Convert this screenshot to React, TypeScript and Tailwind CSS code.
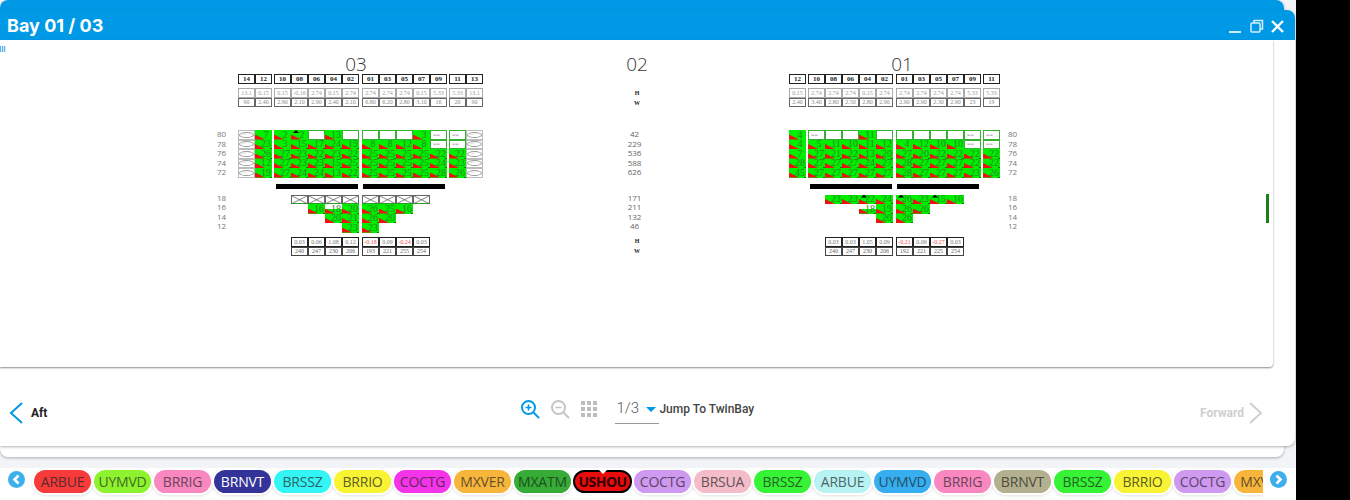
const serif = "font-['Liberation_Serif',serif]";

function SlimChevron({ dir, className }: { dir: "left" | "right"; className: string }) {
  return (
    <svg viewBox="0 0 14 22" className={`w-[14px] h-[22px] ${className}`} fill="none" stroke="currentColor" strokeWidth="2">
      <path d={dir === "left" ? "M13 1L2 11l11 10" : "M1 1l11 10L1 21"} />
    </svg>
  );
}

function RoundArrow({ dir }: { dir: "left" | "right" }) {
  return (
    <svg viewBox="0 0 17 17" className="w-[17px] h-[17px] shrink-0">
      <circle cx="8.5" cy="8.5" r="8.5" fill="#3db0ec" />
      <path
        d={dir === "left" ? "M10.5 4.5L6.5 8.5l4 4" : "M6.5 4.5l4 4-4 4"}
        fill="none"
        stroke="#fff"
        strokeWidth="2.6"
      />
    </svg>
  );
}

function ZoomIcon({ plus, className }: { plus?: boolean; className: string }) {
  return (
    <svg viewBox="0 0 20 20" className={`w-[20px] h-[20px] ${className}`} fill="none" stroke="currentColor" strokeWidth="2">
      <circle cx="8.5" cy="8.5" r="6.5" />
      <path d="M13.5 13.5L19 19" />
      <path d={plus ? "M5.5 8.5h6M8.5 5.5v6" : "M5.5 8.5h6"} strokeWidth="1.6" />
    </svg>
  );
}

// one slot in the bay plan: "" empty, W white, = booked, O reefer oval, X hatch cover, ^n flagged, ~n partial
function Slot({ v }: { v: string }) {
  if (v === "") return <div className="w-[17px] h-full" />;
  if (v === "W")
    return <div className="w-[17px] h-full bg-white border border-[#35b035]" />;
  if (v === "=")
    return (
      <div className="w-[17px] h-full bg-white border border-[#35b035] flex items-center pl-[2px]">
        <span className={`${serif} text-[6px] leading-none text-[#888]`}>==</span>
      </div>
    );
  if (v === "O")
    return (
      <div className="w-[17px] h-full bg-white border border-[#bbb] flex items-center justify-center">
        <div className="w-[15px] h-[6px] rounded-[50%] border border-[#999] flex items-center pl-[2px]">
          <span className={`${serif} text-[4px] leading-none text-[#999]`}>==</span>
        </div>
      </div>
    );
  if (v === "X")
    return (
      <div className="w-[17px] h-full border border-[#666] border-b-[#2a9a2a] bg-white">
        <svg viewBox="0 0 17 10" preserveAspectRatio="none" className="w-full h-full">
          <path d="M0 0L17 10M17 0L0 10" stroke="#444" strokeWidth="0.8" fill="none" />
        </svg>
      </div>
    );
  const flagged = v[0] === "^";
  const partial = v[0] === "~";
  const num = flagged || partial ? v.slice(1) : v;
  return (
    <div
      className={`relative w-[17px] h-full flex items-center justify-center pl-[5px] overflow-hidden ${
        partial ? "bg-white" : "bg-[#00ee00]"
      }`}
    >
      {partial && <span className="absolute left-0 right-0 bottom-0 h-[5px] bg-[#00ee00]" />}
      <span className="absolute left-0 bottom-0 w-[10px] h-[5px] bg-[#ee1111] [clip-path:polygon(0_0,0_100%,100%_100%)]" />
      {flagged && (
        <span className="absolute left-[2px] top-0 w-[6px] h-[3px] bg-black [clip-path:polygon(50%_0,0_100%,100%_100%)]" />
      )}
      {Number(num) >= 15 && <span className="absolute right-0 bottom-0 w-[2px] h-px bg-[#1a6a1a]" />}
      <span className={`relative ${serif} text-[10px] leading-none text-[#2a862a]`}>{num}</span>
    </div>
  );
}

function BoxRow({
  cols,
  gaps,
  cls,
  text,
}: {
  cols: string[][];
  gaps: string;
  cls: string;
  text: string;
}) {
  return (
    <div className={`flex ${gaps}`}>
      {cols.map((group, i) => (
        <div key={i} className="flex">
          {group.map((c, j) => (
            <div
              key={j}
              className={`w-[17px] h-[9.5px] border flex items-center justify-center bg-white ${cls} ${serif} text-[6px] leading-none ${
                c.startsWith("!") ? "text-[#f05050]" : text
              }`}
            >
              {c.replace("!", "")}
            </div>
          ))}
        </div>
      ))}
    </div>
  );
}

type BayData = {
  title: string;
  titleCls: string;
  heads: string[][];
  h: string[][];
  w: string[][];
  upper: string[][][];
  lower: string[][][];
  barPad: string;
  lowerPad: string;
  width: string;
  bottomH: string[][];
  bottomW: string[][];
};

function Bay({ b }: { b: BayData }) {
  return (
    <div className={`${b.width} flex flex-col`}>
      <div
        className={`h-[19px] flex items-center justify-center font-['Open_Sans',sans-serif] text-[19px] font-light text-[#333] leading-none ${b.titleCls}`}
      >
        {b.title}
      </div>
      <div className="flex gap-[2px] [&>*:nth-child(3)]:ml-px">
        {b.heads.map((g, i) => (
          <div key={i} className="flex">
            {g.map((c) => (
              <div
                key={c}
                className={`w-[17px] h-[10px] border border-[#222] flex items-center justify-center bg-white ${serif} text-[7px] font-bold leading-none text-[#222]`}
              >
                {c}
              </div>
            ))}
          </div>
        ))}
      </div>
      <div className="mt-[4px]">
        <BoxRow cols={b.h} gaps="gap-[2px] [&>*:nth-child(3)]:ml-px" cls="border-[#aaa]" text="text-[#999]" />
        <BoxRow cols={b.w} gaps="gap-[2px] [&>*:nth-child(3)]:ml-px" cls="border-[#666]" text="text-[#888]" />
      </div>
      <div className="mt-[23px] flex gap-[2px] [&>*:nth-child(3)]:ml-px">
        {b.upper.map((group, g) => (
          <div key={g} className="flex flex-col">
            {group.map((row, r) => (
              <div key={r} className="flex h-[9.5px]">
                {row.map((v, i) => (
                  <Slot key={i} v={v} />
                ))}
              </div>
            ))}
          </div>
        ))}
      </div>
      <div className={`mt-[6px] flex gap-[5px] ${b.barPad}`}>
        <div className="w-[82px] h-[5px] bg-black" />
        <div className="w-[82px] h-[5px] bg-black" />
      </div>
      <div className={`mt-[6px] flex gap-[3px] ${b.lowerPad}`}>
        {b.lower.map((group, g) => (
          <div key={g} className="flex flex-col">
            {group.map((row, r) => (
              <div key={r} className="flex h-[9.5px]">
                {row.map((v, i) => (
                  <Slot key={i} v={v} />
                ))}
              </div>
            ))}
          </div>
        ))}
      </div>
      <div className={`mt-[4.5px] ${b.lowerPad}`}>
        <BoxRow cols={b.bottomH} gaps="gap-[3px]" cls="border-[#222]" text="text-[#777]" />
        <BoxRow cols={b.bottomW} gaps="gap-[3px]" cls="border-[#444]" text="text-[#666]" />
      </div>
    </div>
  );
}

const bay03: BayData = {
  title: "03",
  titleCls: "pr-[9px]",
  width: "w-[245px]",
  barPad: "pl-[38px]",
  lowerPad: "pl-[53px]",
  heads: [
    ["14", "12"],
    ["10", "08", "06", "04", "02"],
    ["01", "03", "05", "07", "09"],
    ["11", "13"],
  ],
  h: [
    ["13.1", "0.15"],
    ["0.15", "-0.16", "2.74", "0.15", "2.74"],
    ["2.74", "2.74", "2.74", "0.15", "5.33"],
    ["5.33", "13.1"],
  ],
  w: [
    ["90", "2.40"],
    ["2.90", "2.10", "2.90", "2.40", "2.10"],
    ["6.80", "6.20", "2.80", "3.10", "16"],
    ["20", "90"],
  ],
  upper: [
    [
      ["O", "7"],
      ["O", "23"],
      ["O", "26"],
      ["O", "12"],
      ["O", "19"],
    ],
    [
      ["2", "^2", "W", "13", "W"],
      ["3", "15", "17", "24", "19"],
      ["27", "23", "22", "23", "22"],
      ["27", "23", "23", "15", "25"],
      ["27", "24", "24", "13", "22"],
    ],
    [
      ["W", "W", "W", "3", "="],
      ["8", "8", "12", "8", "="],
      ["25", "25", "25", "25", "22"],
      ["25", "25", "25", "25", "24"],
      ["25", "25", "25", "25", "28"],
    ],
    [
      ["=", "O"],
      ["=", "O"],
      ["22", "O"],
      ["23", "O"],
      ["26", "O"],
    ],
  ],
  lower: [
    [
      ["X", "X", "X", "X"],
      ["", "16", "~18", "20"],
      ["", "", "20", "21"],
      ["", "", "", "23"],
    ],
    [
      ["X", "X", "X", "X"],
      ["26", "25", "16", ""],
      ["26", "20", "", ""],
      ["23", "", "", ""],
    ],
  ],
  bottomH: [
    ["0.03", "0.06", "1.08", "0.12"],
    ["!-0.18", "0.09", "!-0.24", "0.03"],
  ],
  bottomW: [
    ["240", "247", "230", "206"],
    ["193", "221", "255", "254"],
  ],
};

const bay01: BayData = {
  title: "01",
  titleCls: "pl-[15px]",
  width: "w-[211px]",
  barPad: "pl-[21px]",
  lowerPad: "pl-[36px]",
  heads: [["12"], ["10", "08", "06", "04", "02"], ["01", "03", "05", "07", "09"], ["11"]],
  h: [
    ["0.15"],
    ["2.74", "2.74", "2.74", "0.15", "2.74"],
    ["2.74", "2.74", "2.74", "2.74", "5.33"],
    ["5.33"],
  ],
  w: [
    ["2.40"],
    ["3.40", "2.80", "2.50", "2.80", "2.90"],
    ["2.90", "2.90", "2.30", "2.90", "23"],
    ["19"],
  ],
  upper: [
    [["4"], ["4"], ["7"], ["28"], ["45"]],
    [
      ["=", "W", "W", "11", "W"],
      ["5", "11", "10", "11", "12"],
      ["27", "21", "22", "13", "20"],
      ["27", "27", "27", "24", "27"],
      ["27", "27", "27", "27", "27"],
    ],
    [
      ["W", "W", "W", "W", "="],
      ["4", "12", "10", "10", "="],
      ["27", "20", "22", "22", "22"],
      ["28", "27", "27", "27", "22"],
      ["28", "27", "27", "27", "23"],
    ],
    [["="], ["="], ["22"], ["22"], ["26"]],
  ],
  lower: [
    [
      ["23", "23", "^22", "24"],
      ["", "", "~18", "19"],
      ["", "", "", "20"],
      ["", "", "", ""],
    ],
    [
      ["^26", "23", "^15", "16"],
      ["26", "26", "", ""],
      ["26", "", "", ""],
      ["", "", "", ""],
    ],
  ],
  bottomH: [
    ["0.03", "0.03", "1.05", "0.09"],
    ["!-0.21", "0.06", "!-0.27", "0.03"],
  ],
  bottomW: [
    ["240", "247", "230", "206"],
    ["192", "221", "225", "254"],
  ],
};

function TierLabels() {
  return (
    <div className="w-[21px] pt-[74.5px] flex flex-col font-['Open_Sans',sans-serif] text-[8px] text-[#777] leading-none">
      {["80", "78", "76", "74", "72"].map((t) => (
        <div key={t} className="h-[9.5px] flex items-center">
          {t}
        </div>
      ))}
      <div className="h-[16px]" />
      {["18", "16", "14", "12"].map((t) => (
        <div key={t} className="h-[9.5px] flex items-center">
          {t}
        </div>
      ))}
    </div>
  );
}

function CenterColumn() {
  return (
    <div className="w-[40px] ml-[134px] flex flex-col items-center font-['Open_Sans',sans-serif] text-[#666] leading-none">
      <div className="h-[19px] text-[19px] font-light flex items-center text-[#333]">02</div>
      <div className={`mt-[14px] h-[10px] flex items-center ${serif} font-bold text-[6px] text-[#222]`}>H</div>
      <div className={`h-[9px] flex items-center ${serif} font-bold text-[6px] text-[#222]`}>W</div>
      <div className="mt-[22.5px] flex flex-col items-center pr-[5px] text-[8px]">
        {["42", "229", "536", "588", "626"].map((t) => (
          <div key={t} className="h-[9.5px] flex items-center">
            {t}
          </div>
        ))}
        <div className="h-[16px]" />
        {["171", "211", "132", "46"].map((t) => (
          <div key={t} className="h-[9.5px] flex items-center">
            {t}
          </div>
        ))}
      </div>
      <div className={`mt-[5px] h-[10px] flex items-center ${serif} font-bold text-[6px] text-[#222]`}>H</div>
      <div className={`h-[9px] flex items-center ${serif} font-bold text-[6px] text-[#222]`}>W</div>
    </div>
  );
}

const ports = [
  ["ARBUE", "bg-[#f73a3a]", "text-[#5c2b2b]"],
  ["UYMVD", "bg-[#8ef32f]", "text-[#3f6b20]"],
  ["BRRIG", "bg-[#f988c0]", "text-[#6b4458]"],
  ["BRNVT", "bg-[#343399]", "text-white"],
  ["BRSSZ", "bg-[#33f5f5]", "text-[#2a6464]"],
  ["BRRIO", "bg-[#f8f333]", "text-[#5e5c24]"],
  ["COCTG", "bg-[#f533e8]", "text-[#642a60]"],
  ["MXVER", "bg-[#f8b53c]", "text-[#65502a]"],
  ["MXATM", "bg-[#36ab36]", "text-[#1f4f1f]"],
  ["USHOU", "bg-[#e80c0c]", "text-[#300]"],
  ["COCTG", "bg-[#cf99f0]", "text-[#5a4668]"],
  ["BRSUA", "bg-[#f3bcc8]", "text-[#665258]"],
  ["BRSSZ", "bg-[#36f336]", "text-[#256425]"],
  ["ARBUE", "bg-[#b8f3f3]", "text-[#4f6666]"],
  ["UYMVD", "bg-[#36aef0]", "text-[#254f68]"],
  ["BRRIG", "bg-[#f988c0]", "text-[#6b4458]"],
  ["BRNVT", "bg-[#b3b08f]", "text-[#4d4c3e]"],
  ["BRSSZ", "bg-[#36f336]", "text-[#256425]"],
  ["BRRIO", "bg-[#f8f333]", "text-[#5e5c24]"],
  ["COCTG", "bg-[#cf99f0]", "text-[#5a4668]"],
  ["MXVER", "bg-[#f8b53c]", "text-[#65502a]"],
];

function PortChip({ name, bg, color }: { name: string; bg: string; color: string }) {
  const current = name === "USHOU";
  return (
    <div
      className={`relative shrink-0 h-[23px] rounded-full flex items-center justify-center font-['Open_Sans',sans-serif] ${bg} ${color} ${
        current
          ? "w-[59px] -mx-px border-2 border-black text-[14px] font-bold tracking-[-0.5px] shadow-[0_0_0_1px_#fff]"
          : "w-[57px] text-[14px] tracking-[-0.2px] shadow-[0_0_0_2px_#fff,0_1px_3px_2px_rgba(0,0,0,0.12)]"
      }`}
    >
      {name}
      {current && (
        <span className="absolute -top-[3px] left-[23px] w-[10px] h-[5px] bg-white [clip-path:polygon(0_0,100%_0,50%_100%)]" />
      )}
    </div>
  );
}

export default function App() {
  return (
    <div className="w-[1350px] h-[500px] bg-black flex overflow-hidden">
      <div className="relative w-[1296px] h-full bg-[#f3f4f8] flex flex-col font-['Roboto',sans-serif]">
        {/* second window behind the main one */}
        <div className="absolute left-0 top-0 w-[1284px] h-[457px] rounded-[8px] bg-white shadow-[0_1px_3px_rgba(0,0,0,0.3)] overflow-hidden">
          <div className="h-[20px] bg-[#0099e6]" />
        </div>

        <div className="relative mt-[10px] w-[1295px] h-[436px] bg-white rounded-tr-[8px] rounded-br-[8px] shadow-[0_1px_3px_rgba(0,0,0,0.3)] flex flex-col">
          <div className="h-[30px] bg-[#0099e6] rounded-tr-[8px] flex items-center pl-[7px] pr-[11px]">
            <span className="font-['Inter',sans-serif] text-[18px] font-bold text-white">Bay 01 / 03</span>
            <div className="ml-auto flex items-center mt-[2px]">
              <div className="w-[12px] h-[2px] bg-[#cfeaf9] mt-[11px]" />
              <svg viewBox="0 0 14 14" className="ml-[9px] w-[14px] h-[14px]" fill="none" stroke="#d5eefb" strokeWidth="1.5">
                <rect x="1" y="4" width="9" height="9" rx="1" />
                <path d="M4 4V1.5h8.5V10H10" />
              </svg>
              <svg viewBox="0 0 13 13" className="ml-[7px] w-[13px] h-[13px]" fill="none" stroke="#fff" strokeWidth="2.4">
                <path d="M1 1l11 11M12 1L1 12" />
              </svg>
            </div>
          </div>

          <div className="relative w-[1273px] h-[327px] bg-white rounded-br-[4px] shadow-[0_1px_2px_rgba(0,0,0,0.45)] pt-[15px] pl-[217px] flex">
            <div className="absolute left-0 top-[6px] w-[6px] h-[6px] bg-[repeating-linear-gradient(90deg,#5bb8ec_0,#5bb8ec_1px,#d5edf9_1px,#d5edf9_2px)]" />
            <div className="absolute left-[1266px] top-[154px] w-[3px] h-[29px] bg-[#1a7f1a]" />
            <TierLabels />
            <Bay b={bay03} />
            <CenterColumn />
            <div className="ml-[132px]">
              <Bay b={bay01} />
            </div>
            <div className="ml-[8px]">
              <TierLabels />
            </div>
          </div>

          <div className="flex-1 flex items-center pt-[13px] pl-[9px] pr-[32px]">
            <SlimChevron dir="left" className="text-[#0099e6]" />
            <span className="ml-[8px] text-[12px] font-bold text-[#222]">Aft</span>
            <div className="ml-[473px] mb-[8px] flex items-center">
              <ZoomIcon plus className="text-[#0099e6]" />
              <ZoomIcon className="ml-[10px] text-[#c4c4c4]" />
              <div className="ml-[11px] grid grid-cols-3 gap-[2px]">
                {[1, 2, 3, 4, 5, 6, 7, 8, 9].map((n) => (
                  <span key={n} className="w-[4px] h-[4px] bg-[#bdbdbd]" />
                ))}
              </div>
              <div className="ml-[18px] w-[44px] h-[30px] border-b border-[#999] flex items-center pl-[1px]">
                <span className="text-[15px] font-light text-[#555]">1/3</span>
                <span className="ml-[7px] mt-[2px] w-[10px] h-[5px] bg-[#0099e6] [clip-path:polygon(0_0,100%_0,50%_100%)]" />
              </div>
              <span className="text-[12px] font-medium text-[#444]">Jump To TwinBay</span>
            </div>
            <span className="ml-auto text-[12px] font-bold text-[#cfcfcf]">Forward</span>
            <SlimChevron dir="right" className="ml-[5px] text-[#cfcfcf]" />
          </div>
        </div>

        <div className="relative mt-[22px] h-[32px] bg-white flex items-start">
          <div className="ml-[8px] mt-[3px]">
            <RoundArrow dir="left" />
          </div>
          <div className="ml-[6px] w-[1232px] h-[32px] flex gap-[3px] overflow-hidden pl-[3px] pt-[2px]">
            {ports.map(([name, bg, color], i) => (
              <PortChip key={i} name={name} bg={bg} color={color} />
            ))}
          </div>
          <div className="ml-[7px] mt-[3px]">
            <RoundArrow dir="right" />
          </div>
        </div>
      </div>
    </div>
  );
}
